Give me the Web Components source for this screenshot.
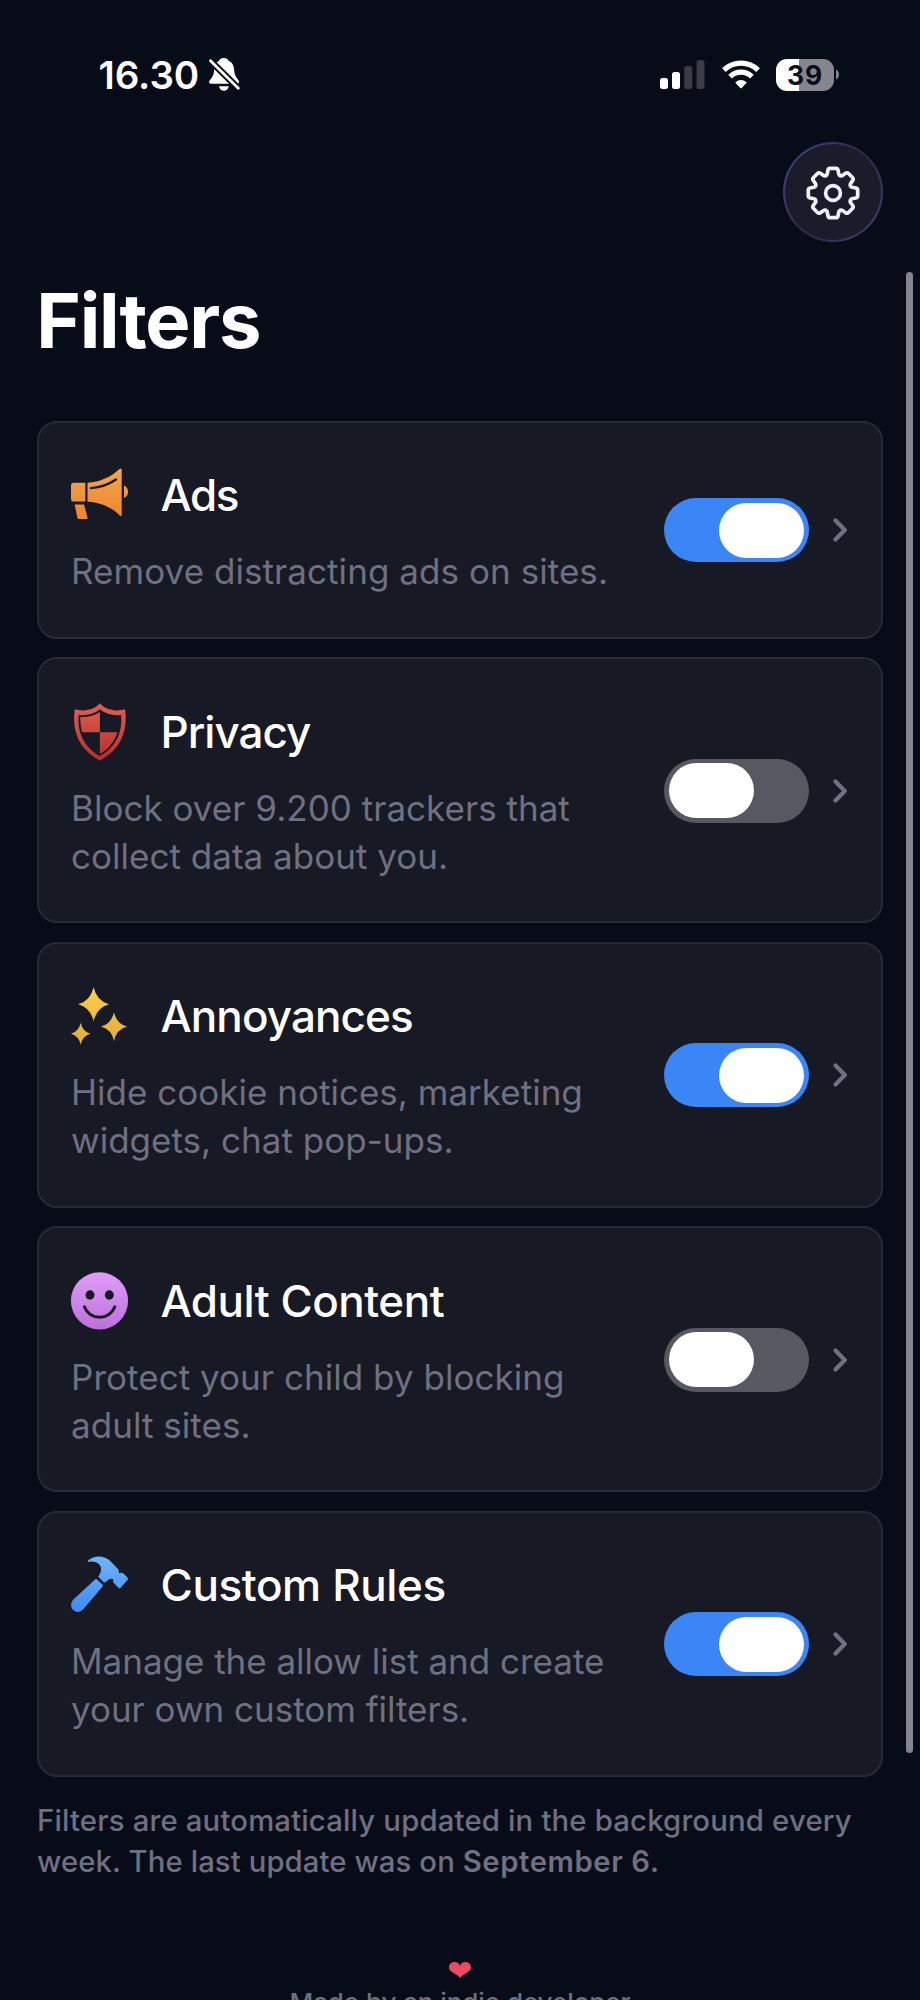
<!DOCTYPE html>
<html lang="en">
<head>
<meta charset="utf-8">
<title>Filters</title>
<style>
html, body { margin: 0; background: #080b18; }
body { width: 920px; height: 2000px; overflow: hidden; font-family: Inter, "Liberation Sans", sans-serif; color: #fff; -webkit-font-smoothing: antialiased; }
</style>
</head>
<body>
<filters-screen>
  <status-bar slot="status" time="16.30" battery="39"></status-bar>
  <settings-button slot="action"></settings-button>
  <span slot="title">Filters</span>
  <filter-card icon="ads" on style="--ts:-1.45px;--ds:.06px"><span slot="name">Ads</span>Remove distracting ads on sites.</filter-card>
  <filter-card icon="privacy" style="--ts:-1px;--ds:.02px"><span slot="name">Privacy</span>Block over 9.200 trackers that<br>collect data about you.</filter-card>
  <filter-card icon="annoyances" on style="--ts:-.9px;--ds:.015px"><span slot="name">Annoyances</span>Hide cookie notices, marketing<br>widgets, chat pop-ups.</filter-card>
  <filter-card icon="adult" style="--ts:-.5px;--ds:.04px"><span slot="name">Adult Content</span>Protect your child by blocking<br>adult sites.</filter-card>
  <filter-card icon="rules" on style="--ts:-.39px;--ds:-.02px"><span slot="name">Custom Rules</span>Manage the allow list and create<br>your own custom filters.</filter-card>
  <update-note slot="footer"></update-note>
</filters-screen>

<script>
const define = (name, render) => customElements.define(name, class extends HTMLElement {
  constructor() { super(); this.attachShadow({ mode: 'open' }); }
  connectedCallback() { this.shadowRoot.innerHTML = render(this); }
});

const gradient = (id, a, b) =>
  `<defs><linearGradient id="${id}" gradientUnits="userSpaceOnUse" x1="0" y1="4" x2="0" y2="54"><stop stop-color="${a}"/><stop offset="1" stop-color="${b}"/></linearGradient></defs>`;

const sparkle = (x, y, w, h) =>
  `<path d="M${x} ${y - h}Q${x + w * .2} ${y - h * .2} ${x + w} ${y}Q${x + w * .2} ${y + h * .2} ${x} ${y + h}Q${x - w * .2} ${y + h * .2} ${x - w} ${y}Q${x - w * .2} ${y - h * .2} ${x} ${y - h}Z"/>`;

const ICONS = {
  ads: gradient('g', '#f2a747', '#ef8230') + `<g fill="url(#g)">
    <path d="M2.500 16.700H14.300V35.600H2.500Q0 35.600 0 33V19.200Q0 16.700 2.500 16.700Z"/>
    <path d="M16.500 16.700C29 16 40 11 48.600 3Q50.700 1.600 50.700 4V49Q50.700 51 48.800 49.400C40 41 29.500 36.300 16.500 35.700Z"/>
    <path d="M53 19.200Q57 21.200 57 25.700T53 32.200Z"/>
    <path d="M3.600 38.400H13L16.600 52Q16.700 53 15.700 53H7.700Q6.700 53 6.500 52Z"/></g>
    <path d="M20 22.100Q34 21 45 13.500" fill="none" stroke="#171924" stroke-width="2.400" stroke-linecap="round"/>`,
  privacy: gradient('g', '#dc5c54', '#b9322a') + `<g fill="url(#g)">
    <path fill-rule="evenodd" d="M28.900.3C34 6.500 44 9 54 6.300C57 26 51 46 28.900 57.500C6.800 46 .8 26 3.800 6.300C13.800 9 23.800 6.500 28.900.3ZM28.900 6.300C23.500 11 15.500 13 7.700 12C6.300 28 11.500 43.500 28.900 53C46.300 43.500 51.500 28 50.100 12C42.300 13 34.300 11 28.900 6.300Z"/>
    <path d="M28.900 8.900V29.200H11.100Q9.200 22 9.200 13.900C17 14.300 23.500 12.600 28.900 8.900Z"/>
    <path d="M28.900 29.200H46.500C43.500 38.500 38 45.500 28.900 51Z"/></g>`,
  annoyances: gradient('g', '#fccc46', '#e2ac40') + `<g fill="url(#g)">${sparkle(22.6, 17.3, 15.4, 17.1)}${sparkle(43, 39.6, 13, 14.3)}${sparkle(9.7, 46.8, 9.7, 11)}</g>`,
  adult: gradient('g', '#dd9bf4', '#bf72de') + `<circle cx="28.500" cy="28.800" r="28.600" fill="url(#g)"/>
    <ellipse cx="19" cy="23" rx="4.500" ry="4.700" fill="#171924"/><ellipse cx="38.300" cy="23" rx="4.500" ry="4.700" fill="#171924"/>
    <path d="M13.400 34.900C19 48.800 38.200 48.800 43.800 34.900" fill="none" stroke="#171924" stroke-width="3" stroke-linecap="round"/>`,
  rules: gradient('g', '#6bb1fb', '#418bf5') + `<g fill="url(#g)">
    <path d="M17.300 4.300C20 1.600 24 .4 28 .4Q34.500.6 39 4.800L47 13Q48.300 14.600 47.800 17.300Q51 16 53 18L56.600 21.800Q57.500 22.800 56.500 24L49.500 32Q48.600 32.900 47.700 32L43 27.300Q41.500 25.700 42.500 23.500Q40.500 22.300 38.500 23L34.300 26.300Q33.400 26.900 32.700 26.200L27.200 20.700C30.500 16 31.300 11.500 28 8.200C25.500 5.700 21.500 5 18 6Q16 6.200 17.300 4.300Z"/>
    <path d="M24.300 23.300Q25.200 22.500 26.100 23.400L31.600 28.700Q32.300 29.500 31.600 30.500L13 52.500C9.700 56.600 5 56.800 2.300 54.100C-.7 51.100-.7 46.600 2.700 43.200Z"/></g>`
};

/* Cog outline: eight tapered teeth with softened corners. */
const cogPath = () => {
  const pts = [];
  for (let k = 0; k < 8; k++) {
    const a = k * Math.PI / 4, c = Math.cos(a), s = Math.sin(a);
    for (const [x, y, r] of [[-6, -17.8, 1.3], [-4.7, -24.7, 1.9], [4.7, -24.7, 1.9], [6, -17.8, 1.3]])
      pts.push([x * c - y * s, x * s + y * c, r]);
  }
  const n = pts.length;
  const toward = (p, q) => {
    const d = Math.hypot(q[0] - p[0], q[1] - p[1]);
    return [p[0] + (q[0] - p[0]) * p[2] / d, p[1] + (q[1] - p[1]) * p[2] / d].map(v => v.toFixed(2)).join(' ');
  };
  return pts.map((p, i) => `${i ? 'L' : 'M'}${toward(p, pts[(i + n - 1) % n])}Q${p[0].toFixed(2)} ${p[1].toFixed(2)} ${toward(p, pts[(i + 1) % n])}`).join('') + 'Z';
};

define('status-bar', el => `
<style>
:host { display: flex; align-items: center; box-sizing: border-box; height: 142px; padding: 7px 81px 0 98.500px; }
.time { font-size: 38.500px; line-height: 46px; font-weight: 600; letter-spacing: -.05px; }
svg { display: block; flex: none; }
.bell { margin-left: 9.500px; }
.signal { margin-left: auto; }
.wifi { margin: 0 16px 0 17px; }
.battery { display: grid; place-items: center; width: 58px; height: 32px; border-radius: 11px; background: linear-gradient(90deg, #fff 23px, #85858f 23px); color: #0a0c1a; font-size: 26.500px; line-height: 32px; font-weight: 700; letter-spacing: .8px; }
</style>
<span class="time">${el.getAttribute('time')}</span>
<svg class="bell" width="31" height="33" viewBox="0 0 31 33">
  <path d="M14.700 0C18 0 19.200 1.500 19.500 2.700C23.500 4.300 25 8 25.200 12.500C25.400 17 27 19 29.300 22C30.700 24 30 25.800 28 25.800H2.200C0 25.800-.5 24 .8 22.300C3.500 19 4.900 17 5.100 12.500C5.300 8 6.500 4.300 10.100 2.700C10.300 1.500 11.500 0 14.700 0Z" fill="#fff"/>
  <path d="M10 28.300H19.800Q18.600 32.800 14.900 32.800T10 28.300Z" fill="#fff"/>
  <path d="M-.5 .8L30 31" stroke="#080b18" stroke-width="6.600"/>
  <path d="M1.500 2.700L29.300 30.300" stroke="#fff" stroke-width="2.800" stroke-linecap="round"/>
</svg>
<svg class="signal" width="45" height="29" viewBox="0 0 45 29">
  <rect y="18" width="8" height="11" rx="2.500" fill="#fff"/><rect x="12" y="12" width="8" height="17" rx="2.500" fill="#fff"/>
  <rect x="24.300" y="6" width="8" height="23" rx="2.500" fill="#3a3b45"/><rect x="36.500" width="8" height="29" rx="2.500" fill="#3a3b45"/>
</svg>
<svg class="wifi" width="38" height="29" viewBox="0 0 38 29">
  <g fill="none" stroke="#fff" stroke-width="5.200"><path d="M1.900 10.100A24.500 24.500 0 0 1 36.100 10.100"/><path d="M8.100 16.700A15.500 15.500 0 0 1 29.900 16.700"/></g>
  <path d="M13.200 22.500Q19 17.700 24.800 22.500L19.700 28.100Q19 28.800 18.300 28.100Z" fill="#fff"/>
</svg>
<div class="battery">${el.getAttribute('battery')}</div>
<svg width="5" height="11" viewBox="0 0 5 11"><path d="M2 .5Q5 2 5 5.500T2 10.500Z" fill="#85858f"/></svg>`);

define('settings-button', () => `
<style>
:host { display: grid; place-items: center; box-sizing: border-box; width: 100px; height: 100px; border: 2px solid transparent; border-radius: 50%;
  background: linear-gradient(#1b1b2b, #1b1b2b) padding-box, linear-gradient(125deg, #40407a, #3a3a6c 25%, #29293f 50%, #34345e 72%, #40407a) border-box; }
svg { display: block; margin-top: 2px; }
</style>
<svg width="54" height="54" viewBox="-27 -27 54 54" fill="none" stroke="#f0f0fc" stroke-width="3.700" stroke-linejoin="round"><path d="${cogPath()}"/><circle r="7.400"/></svg>`);

define('toggle-switch', el => `
<style>
:host { display: flex; flex: none; box-sizing: border-box; width: 145px; height: 64px; padding: 4.500px 5px; border-radius: 32px; background: #585862; }
:host([on]) { background: #3b86f7; justify-content: flex-end; }
i { width: 85px; height: 55px; border-radius: 27.500px; background: #fff; }
</style><i></i>`);

define('filter-card', el => `
<style>
:host { display: flex; align-items: center; box-sizing: border-box; padding: 43.500px 34px 41.600px 32px; border: 2px solid #272935; border-radius: 20px; background: #171924; }
.body { flex: 1; min-width: 0; }
.head { display: flex; align-items: center; gap: 32.500px; height: 58px; }
.head svg { display: block; flex: none; overflow: visible; }
.name { font-size: 44px; line-height: 54px; font-weight: 500; letter-spacing: var(--ts); white-space: nowrap; }
.desc { margin-top: 22.700px; font-size: 35px; line-height: 48px; letter-spacing: var(--ds); color: #6f7081; white-space: nowrap; }
.side { display: flex; align-items: center; gap: 24.500px; height: 0; margin-top: -1.400px; }
</style>
<div class="body">
  <div class="head"><svg width="57" height="58" viewBox="0 0 57 58">${ICONS[el.getAttribute('icon')]}</svg><span class="name"><slot name="name"></slot></span></div>
  <div class="desc"><slot></slot></div>
</div>
<div class="side">
  <toggle-switch${el.hasAttribute('on') ? ' on' : ''}></toggle-switch>
  <svg width="14" height="24" viewBox="0 0 14 24" fill="none" stroke="#6f7080" stroke-width="4.200" stroke-linecap="round" stroke-linejoin="round"><path d="M2.500 2.500L11.800 12L2.500 21.500"/></svg>
</div>`);

define('update-note', () => `
<style>
:host { display: block; margin: 23px 37px 0; color: #6f7081; font-weight: 500; }
p { margin: 0; font-size: 29.300px; line-height: 41px; white-space: nowrap; letter-spacing: .09px; }
.first { letter-spacing: .175px; }
b { font-weight: 600; letter-spacing: .55px; }
.credit { display: flex; flex-direction: column; align-items: center; margin-top: 80px; font-size: 26px; line-height: 34px; letter-spacing: -.07px; }
svg { display: block; margin-bottom: 8.500px; }
</style>
<p><span class="first">Filters are automatically updated in the background every</span><br>week. The last update was on <b>September 6.</b></p>
<div class="credit">
  <svg width="22" height="16" viewBox="0 0 22 16"><path d="M11 3.800C12 1 14 0 16.300 0C19.700 0 22 2.400 22 5.600C22 10.500 14.500 11.500 11 16C7.500 11.500 0 10.500 0 5.600C0 2.400 2.300 0 5.700 0C8 0 10 1 11 3.800Z" fill="#ec4a63"/></svg>
  <span>Made by an indie developer</span>
</div>`);

define('filters-screen', () => `
<style>
:host { display: block; position: relative; height: 2000px; overflow: hidden; }
.action { display: flex; justify-content: flex-end; padding-right: 37px; }
h1 { margin: 33.400px 36.300px 55.600px; font-size: 76px; line-height: 90px; font-weight: 700; letter-spacing: -1.250px; }
main { display: flex; flex-direction: column; gap: 18.700px; margin: 0 37px; }
.scroll { position: absolute; top: 272px; right: 7px; width: 7px; height: 1481px; border-radius: 4px; background: #85848f; }
</style>
<slot name="status"></slot>
<div class="action"><slot name="action"></slot></div>
<h1><slot name="title"></slot></h1>
<main><slot></slot></main>
<slot name="footer"></slot>
<div class="scroll"></div>`);
</script>
</body>
</html>
